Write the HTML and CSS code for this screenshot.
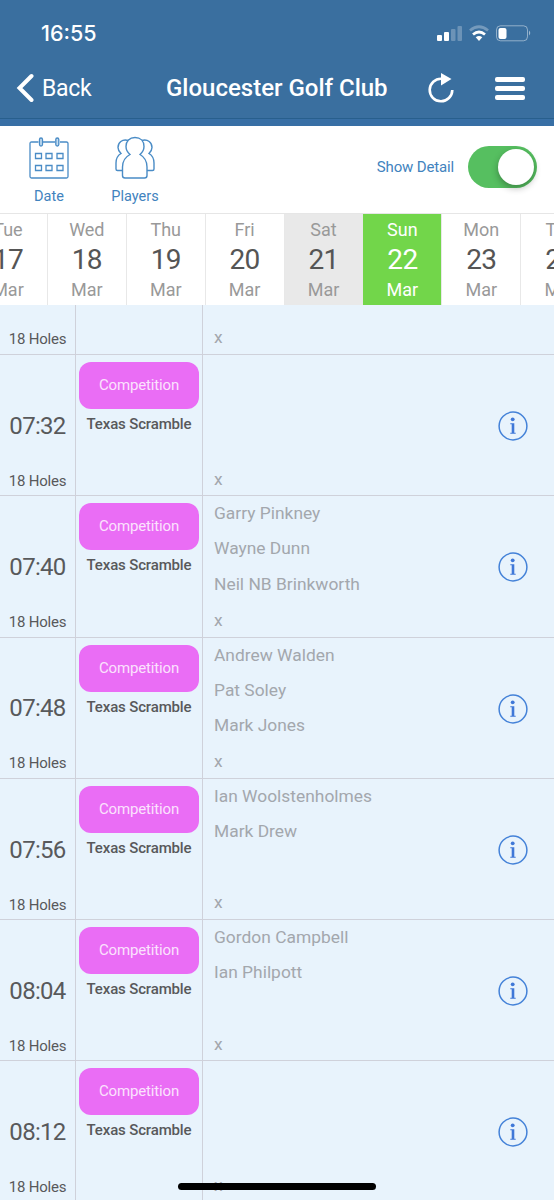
FILE: index.html
```html
<!DOCTYPE html>
<html lang="en">
  <head>
    <meta charset="utf-8">
    <title>Gloucester Golf Club</title>
    <link rel="stylesheet" href="styles.css">
  </head>
  <body>
    <header class="header">
      <div class="status-bar">
        <span class="clock">16:55</span>
        <svg class="status-icons" width="96" height="20" viewBox="0 0 96 20" fill="#fff">
          <rect x="1" y="11" width="5" height="6" rx="1"/>
          <rect x="8" y="8" width="5" height="9" rx="1"/>
          <g opacity=".25">
            <rect x="15" y="5" width="4.500" height="12" rx="1"/>
            <rect x="21.500" y="2" width="4.500" height="15" rx="1"/>
          </g>
          <g fill="none" stroke="#fff" stroke-width="2.800">
            <path d="M34 6.500Q43 -1 52 6.500" opacity=".3"/>
            <path d="M37 10.500Q43 5.500 49 10.500"/>
          </g>
          <path d="M39.700 13.200Q43 10.800 46.300 13.200L43 17z"/>
          <rect x="60.500" y="1.800" width="31" height="15" rx="4" fill="none" stroke="#fff" stroke-opacity=".45"/>
          <rect x="62.500" y="4" width="8" height="11" rx="2"/>
          <path d="M93 6.500q2.500 2.500 0 5z" opacity=".5"/>
        </svg>
      </div>
      <nav class="nav-bar">
        <a class="back">
          <svg width="18" height="30" viewBox="0 0 18 30"><path d="M15.500 3L3.500 15L15.500 27" fill="none" stroke="#fff" stroke-width="4" stroke-linecap="round" stroke-linejoin="miter"/></svg>
          <span>Back</span>
        </a>
        <h1>Gloucester Golf Club</h1>
        <svg class="refresh" width="28" height="32" viewBox="0 0 28 32">
          <path d="M13.500 6.700A11.300 11.300 0 1 0 24.300 18" fill="none" stroke="#fff" stroke-width="2.600"/>
          <path d="M13 1L23.500 7L13 13.500z" fill="#fff"/>
        </svg>
        <div class="menu"><i></i><i></i><i></i></div>
      </nav>
    </header>

    <div class="toolbar">
      <a class="tool tool-date">
        <svg width="40" height="44" viewBox="0 0 40 44" fill="none" stroke="#4a8cc6" stroke-width="1.300">
          <path d="M9.500 6H2.500Q1 6 1 7.500V40.500Q1 42 2.500 42H37.500Q39 42 39 40.500V7.500Q39 6 37.500 6H31M13.500 6H26"/>
          <rect x="10.500" y="2" width="3" height="8" rx="1.500" fill="#c5ddf0"/>
          <rect x="26.800" y="2" width="3" height="8" rx="1.500" fill="#c5ddf0"/>
          <path d="M6.500 17.500h6v5h-6zM17 17.500h6v5h-6zM28 17.500h6v5h-6zM6.500 29.500h6v5h-6zM17 29.500h6v5h-6zM28 29.500h6v5h-6z"/>
        </svg>
        <span>Date</span>
      </a>
      <a class="tool tool-players">
        <svg width="42" height="44" viewBox="0 0 42 44" fill="none" stroke="#4a8cc6" stroke-width="1.400">
          <path d="M14.500 4.500C8 2.700 4 6.500 4 11.500Q4 14.500 7 17.500Q2 20.500 2 27V33Q2 34.500 3.500 34.500H8.500M27.500 4.500C34 2.700 38 6.500 38 11.500Q38 14.500 35 17.500Q40 20.500 40 27V33Q40 34.500 38.500 34.500H33"/>
          <path d="M16 18.500Q12 15 12 10.500C12 5 15.500 1.500 21 1.500S30 5 30 10.500Q30 15 26 18.500Q33 22.500 33 31V39.500Q33 42 30.500 42H11Q8.500 42 8.500 39.500V31Q8.500 22.500 16 18.500z" fill="#fff"/>
        </svg>
        <span>Players</span>
      </a>
      <span class="detail-label">Show Detail</span>
      <div class="toggle"><div class="knob"></div></div>
    </div>

    <div class="days">
      <div class="day"><span>Tue</span><b>17</b><span>Mar</span></div>
      <div class="day"><span>Wed</span><b>18</b><span>Mar</span></div>
      <div class="day"><span>Thu</span><b>19</b><span>Mar</span></div>
      <div class="day"><span>Fri</span><b>20</b><span>Mar</span></div>
      <div class="day weekend"><span>Sat</span><b>21</b><span>Mar</span></div>
      <div class="day selected"><span>Sun</span><b>22</b><span>Mar</span></div>
      <div class="day"><span>Mon</span><b>23</b><span>Mar</span></div>
      <div class="day"><span>Tue</span><b>24</b><span>Mar</span></div>
    </div>

    <main class="tee-sheet">
      <div class="slot slot-partial">
        <div class="time"><span class="holes">18 Holes</span></div>
        <div class="event"></div>
        <ul class="players"><li class="x">x</li></ul>
      </div>
      <div class="slot">
        <div class="time"><b>07:32</b><span class="holes">18 Holes</span></div>
        <div class="event"><div class="badge">Competition</div><strong>Texas Scramble</strong></div>
        <ul class="players"><li></li><li></li><li></li><li class="x">x</li></ul>
        <svg class="info" viewBox="0 0 30 30"><use href="#info-icon"/></svg>
      </div>
      <div class="slot">
        <div class="time"><b>07:40</b><span class="holes">18 Holes</span></div>
        <div class="event"><div class="badge">Competition</div><strong>Texas Scramble</strong></div>
        <ul class="players"><li>Garry Pinkney</li><li>Wayne Dunn</li><li>Neil NB Brinkworth</li><li class="x">x</li></ul>
        <svg class="info" viewBox="0 0 30 30"><use href="#info-icon"/></svg>
      </div>
      <div class="slot">
        <div class="time"><b>07:48</b><span class="holes">18 Holes</span></div>
        <div class="event"><div class="badge">Competition</div><strong>Texas Scramble</strong></div>
        <ul class="players"><li>Andrew Walden</li><li>Pat Soley</li><li>Mark Jones</li><li class="x">x</li></ul>
        <svg class="info" viewBox="0 0 30 30"><use href="#info-icon"/></svg>
      </div>
      <div class="slot">
        <div class="time"><b>07:56</b><span class="holes">18 Holes</span></div>
        <div class="event"><div class="badge">Competition</div><strong>Texas Scramble</strong></div>
        <ul class="players"><li>Ian Woolstenholmes</li><li>Mark Drew</li><li></li><li class="x">x</li></ul>
        <svg class="info" viewBox="0 0 30 30"><use href="#info-icon"/></svg>
      </div>
      <div class="slot">
        <div class="time"><b>08:04</b><span class="holes">18 Holes</span></div>
        <div class="event"><div class="badge">Competition</div><strong>Texas Scramble</strong></div>
        <ul class="players"><li>Gordon Campbell</li><li>Ian Philpott</li><li></li><li class="x">x</li></ul>
        <svg class="info" viewBox="0 0 30 30"><use href="#info-icon"/></svg>
      </div>
      <div class="slot">
        <div class="time"><b>08:12</b><span class="holes">18 Holes</span></div>
        <div class="event"><div class="badge">Competition</div><strong>Texas Scramble</strong></div>
        <ul class="players"><li></li><li></li><li></li><li class="x">x</li></ul>
        <svg class="info" viewBox="0 0 30 30"><use href="#info-icon"/></svg>
      </div>
    </main>
    <div class="home-indicator"></div>

    <svg class="defs" width="0" height="0">
      <symbol id="info-icon" viewBox="0 0 30 30">
        <circle cx="15" cy="15" r="13.900" fill="none" stroke="#4482d8" stroke-width="1.500"/>
        <circle cx="14.700" cy="8.300" r="1.900" fill="#3f78d8"/>
        <path d="M12.300 12.200H16.300V21.700H17.700V22.800H12.300V21.700H13.700V13.300H12.300z" fill="#3f78d8"/>
      </symbol>
    </svg>
  </body>
</html>
```

FILE: styles.css
```css
* {
  box-sizing: border-box;
}
body {
  margin: 0;
  height: 1200px;
  overflow: hidden;
  position: relative;
  font-family: Roboto, "Liberation Sans", sans-serif;
  background: #e8f3fc;
  color: #58595b;
}
.header {
  height: 126px;
  background: #3a6f9f;
  border-bottom: 7px solid #386fa5;
  color: #fff;
}
.status-bar {
  height: 63px;
  padding: 20px 22px 0 41px;
  display: flex;
  justify-content: space-between;
}
.clock {
  font: 500 21.5px/26px Inter, sans-serif;
}
.status-icons {
  margin-top: 4px;
}
.nav-bar {
  height: 56px;
  display: flex;
  align-items: center;
  padding: 0 29px 5px 16px;
  border-bottom: 1px solid #285f8d;
}
.back {
  display: flex;
  align-items: center;
  gap: 8px;
  width: 150px;
  font-size: 23px;
  letter-spacing: -.3px;
}
h1 {
  margin: 0;
  width: 262px;
  font-size: 24px;
  font-weight: 500;
  white-space: nowrap;
}
.menu {
  margin-left: auto;
  width: 30px;
  display: flex;
  flex-direction: column;
  gap: 4px;
}
.menu i {
  height: 5px;
  border-radius: 2px;
  background: #fff;
}
.toolbar {
  height: 87px;
  display: flex;
  background: #fff;
  color: #4283be;
}
.tool {
  display: flex;
  flex-direction: column;
  align-items: center;
  width: 86px;
  padding-top: 10px;
  font-size: 14.5px;
}
.tool-date {
  margin-left: 6px;
}
.tool span {
  margin-top: 8px;
  line-height: 17px;
}
.detail-label {
  margin: 32px 14px 0 auto;
  font-size: 15px;
  line-height: 18px;
  letter-spacing: -.15px;
}
.toggle {
  width: 69px;
  height: 42px;
  margin: 20px 17px 0 0;
  padding: 3px;
  border-radius: 21px;
  background: #56bf60;
}
.knob {
  width: 36px;
  height: 36px;
  margin-left: auto;
  border-radius: 50%;
  background: #fff;
  box-shadow: 0 3px 7px rgba(0, 0, 0, .3);
}
.days {
  display: flex;
  height: 92px;
  margin-left: -31px;
  overflow: hidden;
  background: #fff;
  border-top: 1px solid #e6e6e6;
}
.day {
  flex: 0 0 78.9px;
  display: flex;
  flex-direction: column;
  align-items: center;
  padding-top: 5px;
  border-right: 1px solid #e8e8e8;
  font-size: 18px;
  line-height: 22px;
  color: #999;
}
.day b {
  font-size: 28px;
  font-weight: 400;
  line-height: 38px;
  letter-spacing: -.7px;
  color: #555;
}
.weekend {
  background: #e9e9e9;
}
.selected,
.selected b {
  background: #72d64a;
  color: #fff;
}
.slot {
  display: grid;
  grid-template-columns: 76px 127px 1fr 72px;
  height: 141.3px;
  border-bottom: 1px solid #cfd1da;
}
.slot-partial {
  height: 50px;
}
.time,
.event {
  border-right: 1px solid #cfd1da;
}
.time {
  display: flex;
  flex-direction: column;
  align-items: center;
  justify-content: flex-end;
  padding-bottom: 6px;
}
.time b {
  font-size: 24px;
  font-weight: 400;
  line-height: 28px;
  letter-spacing: -.7px;
  margin-bottom: 32px;
}
.holes {
  font-size: 15px;
  line-height: 18px;
  letter-spacing: -.2px;
}
.event {
  display: flex;
  flex-direction: column;
  align-items: center;
  padding-top: 7px;
}
.badge {
  width: 120px;
  height: 47px;
  border-radius: 12px;
  background: #ea6df5;
  color: #fbe2fd;
  font-size: 15px;
  line-height: 46px;
  letter-spacing: -.15px;
  text-align: center;
}
.event strong {
  margin-top: 6px;
  font-size: 15px;
  font-weight: 500;
  line-height: 18px;
  letter-spacing: -.15px;
}
.players {
  margin: 0;
  padding: 0 0 0 11px;
  display: flex;
  flex-direction: column;
  justify-content: flex-end;
  list-style: none;
  font-size: 17.4px;
  line-height: 35.2px;
  color: #a3a7ad;
}
.players li {
  height: 35.2px;
}
.players .x {
  line-height: 36.5px;
}
.info {
  width: 30px;
  height: 30px;
  margin: 56px 0 0 15.5px;
}
.defs {
  display: none;
}
/* sits over the last slot */
.home-indicator {
  position: absolute;
  left: 178px;
  bottom: 10px;
  width: 198px;
  height: 7px;
  border-radius: 4px;
  background: #000;
}
```
